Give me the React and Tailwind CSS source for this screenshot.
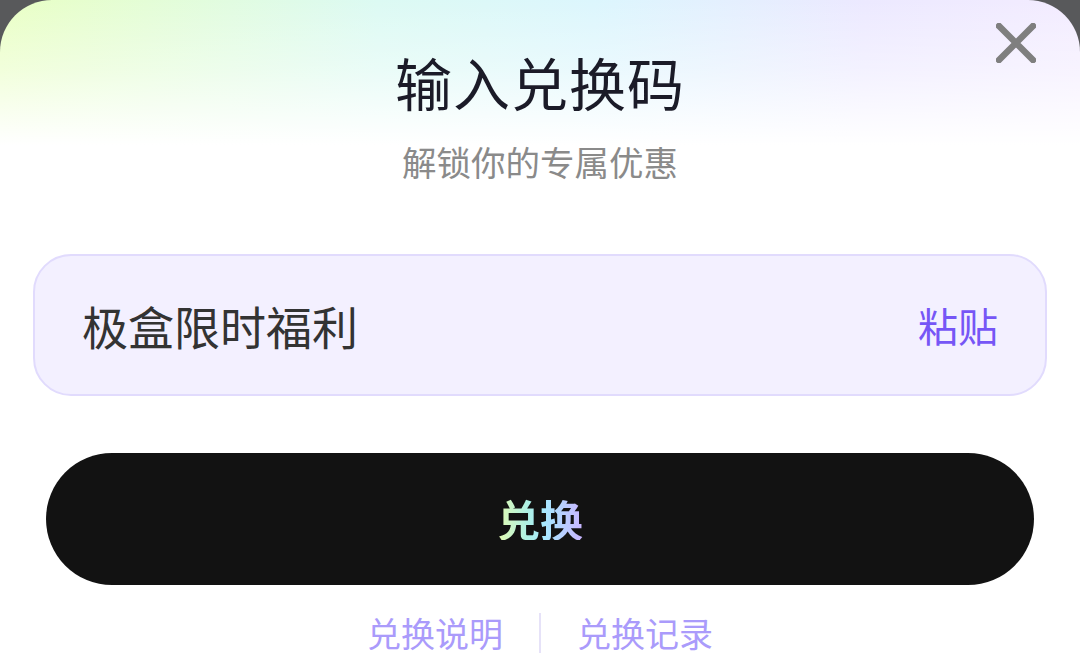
export default function App() {
  const font = { fontFamily: '"Noto Sans CJK SC", "Noto Sans", sans-serif' };
  return (
    <div className="w-[1080px] h-[671px] bg-[#58595b] overflow-hidden" style={font}>
      <div className="relative w-full h-full rounded-t-[52px] bg-[linear-gradient(to_bottom,rgba(255,255,255,0)_0px,rgba(255,255,255,0.4)_70px,#ffffff_145px),linear-gradient(to_right,#e9ffc4_0%,#dcfaf3_35%,#dcf6fd_55%,#ece9ff_80%,#f3ecff_100%)] flex flex-col items-center">
        <button className="absolute right-[44px] top-[23px] w-[40px] h-[40px] flex items-center justify-center">
          <svg width="40" height="40" viewBox="0 0 40 40" fill="none">
            <path d="M3 3 L37 37 M37 3 L3 37" stroke="#7f7f7f" strokeWidth="6.5" strokeLinecap="round" />
          </svg>
        </button>
        <div className="pt-[53px] text-[57px] leading-none font-normal text-[#1b1b28] tracking-[1px]">输入兑换码</div>
        <div className="mt-[34px] text-[34.5px] leading-none text-[#8a8a8a]">解锁你的专属优惠</div>
        <div className="mt-[75px] w-[1014px] h-[142px] rounded-[38px] border-2 border-[#e1dbfd] bg-[#f3f0ff] flex items-center justify-between pl-[47px] pr-[47px]">
          <span className="text-[46px] leading-none text-[#333333]">极盒限时福利</span>
          <span className="text-[40px] leading-none text-[#7656f6]">粘贴</span>
        </div>
        <button className="mt-[57px] w-[988px] h-[132px] rounded-full bg-[#121212] flex items-center justify-center">
          <span className="text-[43px] leading-none font-bold bg-[linear-gradient(to_right,#e4fbb0_0%,#aef1e4_35%,#a7e9ff_55%,#c9b4ff_100%)] bg-clip-text text-transparent">兑换</span>
        </button>
        <div className="mt-[28px] flex items-center">
          <span className="text-[34px] leading-none text-[#aa9bfb]">兑换说明</span>
          <span className="mx-[36px] w-[2px] h-[40px] bg-[#e6e2f8]"></span>
          <span className="text-[34px] leading-none text-[#aa9bfb]">兑换记录</span>
        </div>
      </div>
    </div>
  );
}
